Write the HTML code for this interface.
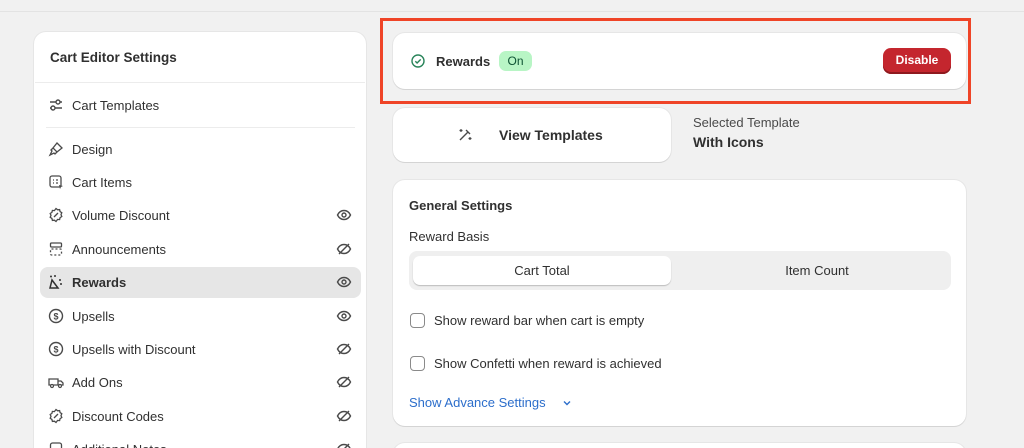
<!DOCTYPE html>
<html style="overflow:hidden;height:448px"><head><meta charset="utf-8"><style>
*{box-sizing:border-box;margin:0;padding:0}
body{width:1024px;height:448px;overflow:hidden;background:#f1f1f1;font-family:"Liberation Sans",sans-serif;color:#303030;position:relative;font-size:13px}
.a{position:absolute}
.card{position:absolute;background:#fff;border-radius:12px;box-shadow:0 1px 0 #d4d4d4,0 0 0 1px #e6e6e6}
.item{position:absolute;left:40px;width:321px;height:30px;display:flex;align-items:center;padding-left:8px;font-size:13px;color:#303030}
.item svg{width:16px;height:16px;margin-right:8px;flex:none}
.item svg.eye{position:absolute;right:9px;top:7px;width:16px;height:16px;margin-right:0}
</style></head><body>
<div class="a" style="left:0;top:0;width:1024px;height:12px;border-bottom:1px solid #e3e3e3;background:#f1f1f1"></div>

<div class="card" style="left:34px;top:32px;width:332px;height:430px"></div>
<div class="a" style="left:50px;top:50px;font-weight:bold;font-size:13.5px">Cart Editor Settings</div>
<div class="a" style="left:35px;top:82px;width:330px;height:1px;background:#ececec"></div>
<div class="a" style="left:46px;top:127px;width:309px;height:1px;background:#ececec"></div>
<div class="a" style="left:40px;top:267px;width:321px;height:31px;background:#e6e6e6;border-radius:8px"></div>

<svg width="0" height="0" style="position:absolute"><defs>
<g id="eye"><path d="M1.5 8C3 5 5.5 3.5 8 3.5S13 5 14.5 8C13 11 10.5 12.5 8 12.5S3 11 1.5 8Z" fill="none" stroke="#4a4a4a" stroke-width="1.4"/><circle cx="8" cy="8" r="2" fill="none" stroke="#4a4a4a" stroke-width="1.4"/></g>
<g id="noeye"><path d="M1.5 8C3 5 5.5 3.5 8 3.5S13 5 14.5 8C13 11 10.5 12.5 8 12.5S3 11 1.5 8Z" fill="none" stroke="#4a4a4a" stroke-width="1.4"/><path d="M3 13L13 3" stroke="#4a4a4a" stroke-width="1.4"/></g>
<g id="disc"><path d="M8 1.5l1.6 1.3 2-.2.5 2 1.7 1.1-.8 1.9.8 1.9-1.7 1.1-.5 2-2-.2L8 14.5l-1.6-1.3-2 .2-.5-2-1.7-1.1.8-1.9-.8-1.9 1.7-1.1.5-2 2 .2Z" fill="none" stroke="#4a4a4a" stroke-width="1.3"/><path d="M6 10l4-4" stroke="#4a4a4a" stroke-width="1.3"/></g>
<g id="dollar"><circle cx="8" cy="8" r="6.5" fill="none" stroke="#4a4a4a" stroke-width="1.4"/><text x="8" y="11.5" font-size="9" text-anchor="middle" fill="#4a4a4a" font-family="Liberation Sans" font-weight="bold">$</text></g>
</defs></svg>

<div class="item" style="top:90px"><svg viewBox="0 0 16 16"><path d="M2 5h12M2 11h12" stroke="#4a4a4a" stroke-width="1.4"/><circle cx="10" cy="5" r="2" fill="#fff" stroke="#4a4a4a" stroke-width="1.4"/><circle cx="5" cy="11" r="2" fill="#fff" stroke="#4a4a4a" stroke-width="1.4"/></svg>Cart Templates</div>
<div class="item" style="top:134px"><svg viewBox="0 0 16 16"><path d="M9 2l5 5-5 4-4-4z M5 7l-2 2 1 1-2 4 4-2 1 1 2-2" fill="none" stroke="#4a4a4a" stroke-width="1.3"/></svg>Design</div>
<div class="item" style="top:167px"><svg viewBox="0 0 16 16"><rect x="2" y="2" width="11" height="11" rx="2" fill="none" stroke="#4a4a4a" stroke-width="1.3"/><path d="M5 6h1M8 6h2M5 9h1M8 9h2" stroke="#4a4a4a" stroke-width="1.3"/><path d="M11 11l4 1-2 1-1 2z" fill="#4a4a4a"/></svg>Cart Items</div>
<div class="item" style="top:200px"><svg viewBox="0 0 16 16"><use href="#disc"/></svg>Volume Discount<svg class="eye" viewBox="0 0 16 16"><use href="#eye"/></svg></div>
<div class="item" style="top:234px"><svg viewBox="0 0 16 16"><rect x="2.5" y="2" width="11" height="4" rx="1" fill="none" stroke="#4a4a4a" stroke-width="1.3"/><rect x="2.5" y="8" width="11" height="6" rx="1" fill="none" stroke="#4a4a4a" stroke-width="1.3" stroke-dasharray="2 2"/></svg>Announcements<svg class="eye" viewBox="0 0 16 16"><use href="#noeye"/></svg></div>
<div class="item" style="top:267px;font-weight:bold"><svg viewBox="0 0 16 16"><path d="M4 6l6 8H2z" fill="none" stroke="#303030" stroke-width="1.5"/><circle cx="3" cy="2.5" r="1" fill="#303030"/><circle cx="7" cy="2" r="1" fill="#303030"/><circle cx="12" cy="6" r="1" fill="#303030"/><circle cx="13" cy="10" r="1" fill="#303030"/></svg>Rewards<svg class="eye" viewBox="0 0 16 16"><use href="#eye"/></svg></div>
<div class="item" style="top:301px"><svg viewBox="0 0 16 16"><use href="#dollar"/></svg>Upsells<svg class="eye" viewBox="0 0 16 16"><use href="#eye"/></svg></div>
<div class="item" style="top:334px"><svg viewBox="0 0 16 16"><use href="#dollar"/></svg>Upsells with Discount<svg class="eye" viewBox="0 0 16 16"><use href="#noeye"/></svg></div>
<div class="item" style="top:367px"><svg viewBox="0 0 16 16"><path d="M1 5h9v6H1zM10 7h3l2 2v2h-5" fill="none" stroke="#4a4a4a" stroke-width="1.3"/><circle cx="4" cy="12" r="1.5" fill="#fff" stroke="#4a4a4a" stroke-width="1.2"/><circle cx="12" cy="12" r="1.5" fill="#fff" stroke="#4a4a4a" stroke-width="1.2"/></svg>Add Ons<svg class="eye" viewBox="0 0 16 16"><use href="#noeye"/></svg></div>
<div class="item" style="top:401px"><svg viewBox="0 0 16 16"><use href="#disc"/></svg>Discount Codes<svg class="eye" viewBox="0 0 16 16"><use href="#noeye"/></svg></div>
<div class="item" style="top:434px"><svg viewBox="0 0 16 16"><rect x="2.5" y="2" width="11" height="12" rx="2" fill="none" stroke="#4a4a4a" stroke-width="1.3"/></svg>Additional Notes<svg class="eye" viewBox="0 0 16 16"><use href="#noeye"/></svg></div>

<div class="a" style="left:380px;top:18px;width:591px;height:86px;border:3px solid #ef4427"></div>
<div class="card" style="left:393px;top:33px;width:573px;height:56px"></div>
<svg class="a" style="left:411px;top:54px" width="14" height="14" viewBox="0 0 14 14"><circle cx="7" cy="7" r="6" fill="none" stroke="#29845a" stroke-width="1.4"/><path d="M4.3 7.2l1.8 1.8 3.6-3.6" fill="none" stroke="#29845a" stroke-width="1.4"/></svg>
<div class="a" style="left:436px;top:54px;font-weight:bold">Rewards</div>
<div class="a" style="left:499px;top:51px;width:33px;height:20px;background:#b8f5c5;border-radius:7px;font-size:12px;color:#0c5132;text-align:center;line-height:20px">On</div>
<div class="a" style="left:883px;top:48px;width:68px;height:26px;background:#c4262e;border-radius:8px;box-shadow:inset 0 -2px 0 #8e1a1f;color:#fff;font-size:12px;font-weight:bold;text-align:center;line-height:25px">Disable</div>

<div class="card" style="left:393px;top:108px;width:278px;height:54px"></div>
<svg class="a" style="left:457px;top:127px" width="16" height="16" viewBox="0 0 16 16"><path d="M3 13L11 5M9 3l4 4" stroke="#4a4a4a" stroke-width="1.4" fill="none"/><path d="M4 2v3M2.5 3.5h3M13 10v3M11.5 11.5h3" stroke="#4a4a4a" stroke-width="1.2"/></svg>
<div class="a" style="left:499px;top:127px;font-weight:bold;font-size:14px">View Templates</div>
<div class="a" style="left:693px;top:115px;color:#4a4a4a">Selected Template</div>
<div class="a" style="left:693px;top:134px;font-weight:bold;font-size:14px">With Icons</div>

<div class="card" style="left:393px;top:180px;width:573px;height:246px"></div>
<div class="a" style="left:409px;top:198px;font-weight:bold">General Settings</div>
<div class="a" style="left:409px;top:229px">Reward Basis</div>
<div class="a" style="left:409px;top:251px;width:542px;height:39px;background:#efefef;border-radius:8px"></div>
<div class="a" style="left:413px;top:256px;width:258px;height:29px;background:#fff;border-radius:7px;box-shadow:0 1px 1px #bbb;text-align:center;line-height:29px">Cart Total</div>
<div class="a" style="left:683px;top:256px;width:268px;height:29px;text-align:center;line-height:29px">Item Count</div>
<div class="a" style="left:410px;top:313px;width:15px;height:15px;border:1px solid #8a8a8a;border-radius:4px"></div>
<div class="a" style="left:434px;top:313px">Show reward bar when cart is empty</div>
<div class="a" style="left:410px;top:356px;width:15px;height:15px;border:1px solid #8a8a8a;border-radius:4px"></div>
<div class="a" style="left:434px;top:356px">Show Confetti when reward is achieved</div>
<div class="a" style="left:409px;top:395px;color:#2c6ecb">Show Advance Settings</div>
<svg class="a" style="left:562px;top:398px" width="10" height="10" viewBox="0 0 10 10"><path d="M2 3.5l3 3 3-3" fill="none" stroke="#2c6ecb" stroke-width="1.4"/></svg>

<div class="card" style="left:393px;top:443px;width:573px;height:20px;border-radius:12px 12px 0 0"></div>
</body></html>
